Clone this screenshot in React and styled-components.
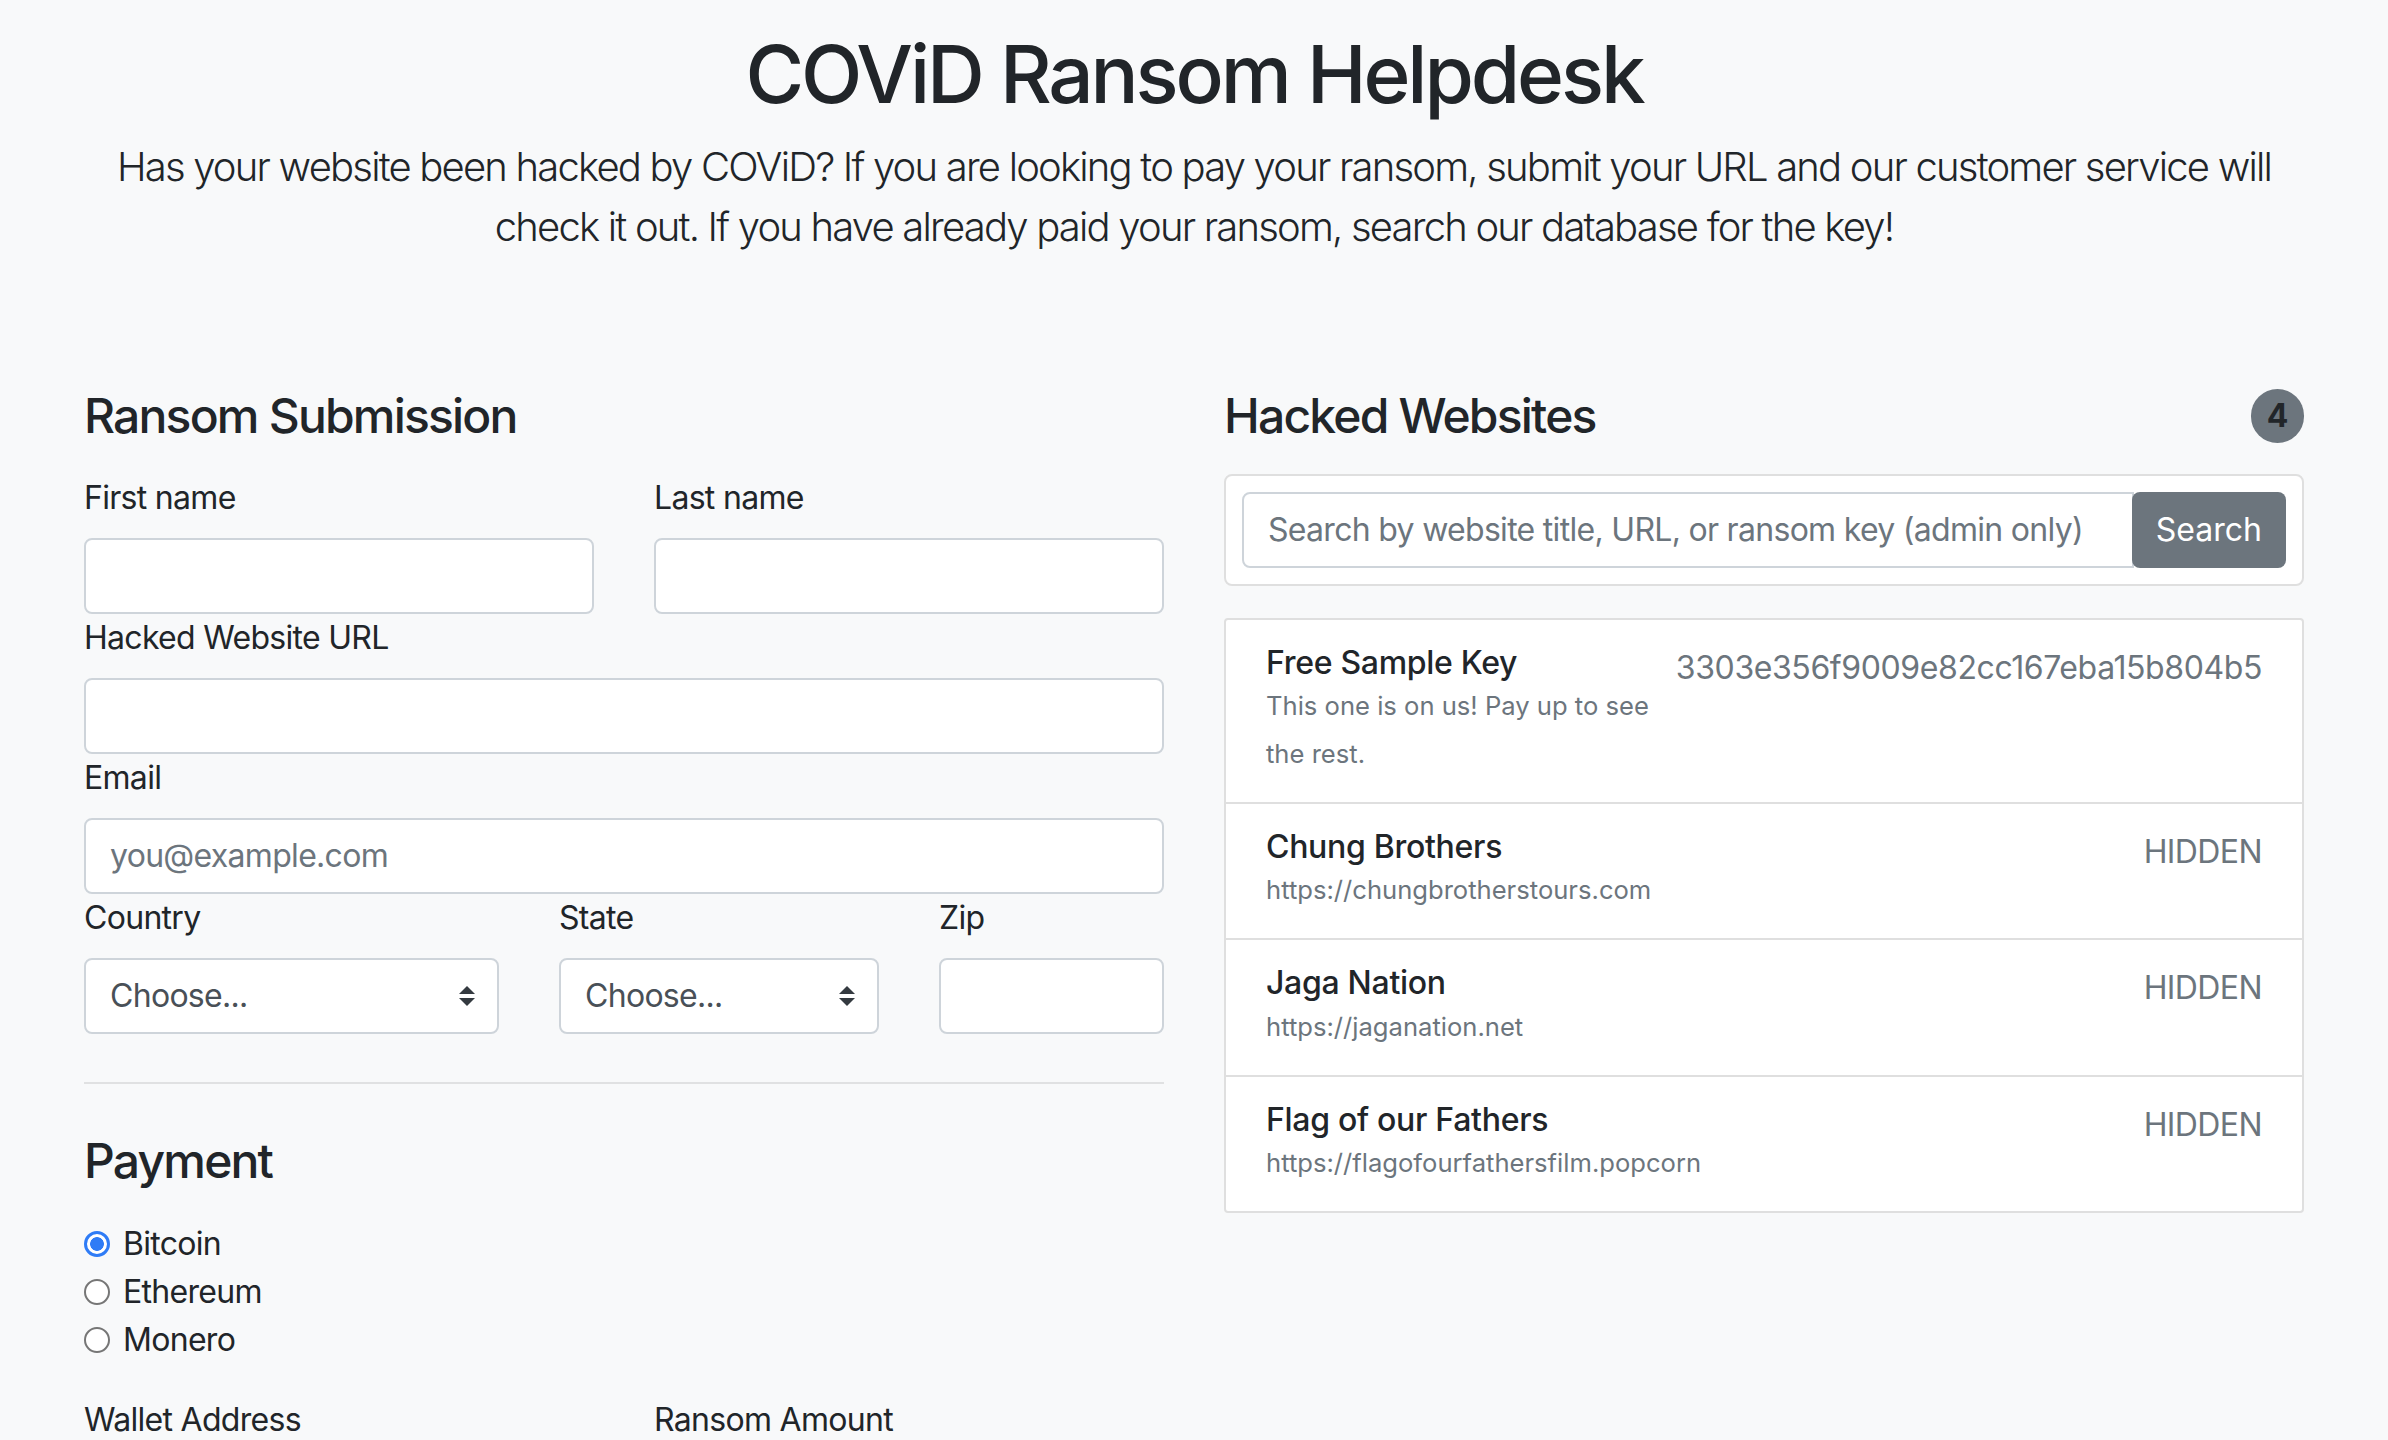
import React from 'react';
import styled, { createGlobalStyle } from 'styled-components';

const GlobalStyle = createGlobalStyle`
  * { box-sizing: border-box; }
  body {
    margin: 0;
    background: #f8f9fa;
    color: #212529;
    font-family: Inter, "Noto Sans", "Liberation Sans", sans-serif;
    font-size: 32px;
    line-height: 1.5;
    letter-spacing: -0.7px;
  }
`;

const Container = styled.div`
  max-width: 2280px;
  margin: 0 auto;
  padding: 0 30px;
`;

const Header = styled.header`
  text-align: center;
  padding: 26px 0 130px;
`;

const Title = styled.h1`
  margin: 0 0 15px;
  font-size: 80px;
  font-weight: 500;
  line-height: 1.2;
  letter-spacing: -3.1px;
`;

const Lead = styled.p`
  margin: 0;
  font-size: 40px;
  font-weight: 300;
  line-height: 60px;
  letter-spacing: -1.8px;
`;

const Columns = styled.div`
  display: grid;
  grid-template-columns: 1fr 1fr;
  column-gap: 60px;
  align-items: start;
`;

const Column = styled.section``;

const SectionTitle = styled.h4`
  display: flex;
  justify-content: space-between;
  align-items: center;
  margin: 0 0 ${(p) => p.$gap ?? 29}px;
  font-size: 48px;
  font-weight: 500;
  line-height: 1.2;
  letter-spacing: -1.8px;
`;

const Badge = styled.span`
  display: inline-flex;
  align-items: center;
  justify-content: center;
  min-width: 53px;
  height: 54px;
  border-radius: 27px;
  background: #6c757d;
  color: #212529;
  font-size: 32px;
  font-weight: 700;
  letter-spacing: 0;
`;

const FieldRow = styled.div`
  display: grid;
  grid-template-columns: ${(p) => p.$cols || '1fr'};
  column-gap: 60px;
`;

const Field = styled.div`
  min-width: 0;
`;

const Label = styled.label`
  display: block;
  margin-bottom: 16px;
  line-height: 48px;
`;

const TextInput = styled.input`
  display: block;
  width: 100%;
  height: 76px;
  padding: 0 24px;
  border: 2px solid #ced4da;
  border-radius: 8px;
  background: #fff;
  color: #495057;
  font: inherit;
  font-size: 32px;
  letter-spacing: -0.7px;
  &::placeholder { color: #6c757d; }
`;

const SelectWrap = styled.div`
  position: relative;
`;

const Select = styled.select`
  display: block;
  width: 100%;
  height: 76px;
  padding: 0 64px 0 24px;
  border: 2px solid #ced4da;
  border-radius: 8px;
  background: #fff;
  color: #495057;
  font: inherit;
  font-size: 32px;
  letter-spacing: -0.7px;
  appearance: none;
`;

const Arrows = styled.svg`
  position: absolute;
  right: 24px;
  top: 50%;
  width: 16px;
  height: 20px;
  margin-top: -10px;
  pointer-events: none;
`;

const Divider = styled.hr`
  margin: 48px 0;
  border: 0;
  border-top: 2px solid #e0e1e2;
`;

const RadioGroup = styled.div`
  margin: 31px 0 32px;
`;

const RadioRow = styled.label`
  display: flex;
  align-items: center;
  gap: 13px;
  height: 48px;
`;

const Radio = styled.input`
  appearance: none;
  margin: 0;
  width: 26px;
  height: 26px;
  border-radius: 50%;
  border: 2px solid #767676;
  background: #fff;
  &:checked {
    border: 3px solid #2f7cf6;
    background: radial-gradient(circle, #2f7cf6 0 6.5px, #fff 7.2px);
  }
`;

const Card = styled.form`
  display: flex;
  padding: 16px;
  margin-bottom: 32px;
  background: #fff;
  border: 2px solid #dfdfdf;
  border-radius: 8px;
`;

const SearchInput = styled(TextInput)`
  flex: 1;
  min-width: 0;
  border-radius: 8px 0 0 8px;
`;

const SearchButton = styled.button`
  height: 76px;
  padding: 0 24px;
  border: 0;
  border-radius: 8px;
  margin-left: -2px;
  background: #6c757d;
  color: #fff;
  font: inherit;
  font-size: 32px;
  letter-spacing: 0;
`;

const ListGroup = styled.ul`
  margin: 0;
  padding: 0;
  list-style: none;
  background: #fff;
  border: 2px solid #dfdfdf;
  border-radius: 4px;
`;

const ListItem = styled.li`
  display: flex;
  justify-content: space-between;
  gap: 8px;
  padding: 24px 40px;
  & + & { border-top: 2px solid #dfdfdf; }
`;

const ItemText = styled.div`
  flex: 1;
  min-width: 0;
`;

const ItemTitle = styled.h6`
  margin: 0;
  font-size: 32px;
  font-weight: 500;
  line-height: 1.2;
  letter-spacing: -0.3px;
`;

const ItemMeta = styled.small`
  display: block;
  color: #6c757d;
  font-size: 25.6px;
  line-height: 48px;
  letter-spacing: 0;
`;

const ItemValue = styled.span`
  flex-shrink: 0;
  color: #6c757d;
  line-height: 48px;
  letter-spacing: ${(p) => (p.$key ? '-0.4px' : '-0.6px')};
`;

const sites = [
  { title: 'Free Sample Key', meta: 'This one is on us! Pay up to see the rest.', value: '3303e356f9009e82cc167eba15b804b5' },
  { title: 'Chung Brothers', meta: 'https://chungbrotherstours.com', value: 'HIDDEN' },
  { title: 'Jaga Nation', meta: 'https://jaganation.net', value: 'HIDDEN' },
  { title: 'Flag of our Fathers', meta: 'https://flagofourfathersfilm.popcorn', value: 'HIDDEN' },
];

const ChooseSelect = () => (
  <SelectWrap>
    <Select defaultValue="">
      <option value="">Choose...</option>
    </Select>
    <Arrows viewBox="0 0 4 5">
      <path fill="#343a40" d="M2 0L0 2h4zm0 5L0 3h4z" />
    </Arrows>
  </SelectWrap>
);

const App = () => {
  return (
    <Container>
      <GlobalStyle />
      <Header>
        <Title>COViD Ransom Helpdesk</Title>
        <Lead>
          Has your website been hacked by COViD? If you are looking to pay your ransom, submit your URL and our
          customer service will check it out. If you have already paid your ransom, search our database for the key!
        </Lead>
      </Header>

      <Columns>
        <Column>
          <SectionTitle>Ransom Submission</SectionTitle>
          <FieldRow $cols="1fr 1fr">
            <Field>
              <Label>First name</Label>
              <TextInput />
            </Field>
            <Field>
              <Label>Last name</Label>
              <TextInput />
            </Field>
          </FieldRow>
          <Field>
            <Label>Hacked Website URL</Label>
            <TextInput />
          </Field>
          <Field>
            <Label>Email</Label>
            <TextInput placeholder="you@example.com" />
          </Field>
          <FieldRow $cols="415px 320px 1fr">
            <Field>
              <Label>Country</Label>
              <ChooseSelect />
            </Field>
            <Field>
              <Label>State</Label>
              <ChooseSelect />
            </Field>
            <Field>
              <Label>Zip</Label>
              <TextInput />
            </Field>
          </FieldRow>

          <Divider />

          <SectionTitle $gap={0}>Payment</SectionTitle>
          <RadioGroup>
            <RadioRow>
              <Radio type="radio" name="pay" defaultChecked />
              Bitcoin
            </RadioRow>
            <RadioRow>
              <Radio type="radio" name="pay" />
              Ethereum
            </RadioRow>
            <RadioRow>
              <Radio type="radio" name="pay" />
              Monero
            </RadioRow>
          </RadioGroup>
          <FieldRow $cols="1fr 1fr">
            <Field>
              <Label>Wallet Address</Label>
              <TextInput />
            </Field>
            <Field>
              <Label>Ransom Amount</Label>
              <TextInput />
            </Field>
          </FieldRow>
        </Column>

        <Column>
          <SectionTitle>
            <span>Hacked Websites</span>
            <Badge>4</Badge>
          </SectionTitle>
          <Card onSubmit={(e) => e.preventDefault()}>
            <SearchInput placeholder="Search by website title, URL, or ransom key (admin only)" />
            <SearchButton type="submit">Search</SearchButton>
          </Card>
          <ListGroup>
            {sites.map((site, i) => (
              <ListItem key={site.title}>
                <ItemText>
                  <ItemTitle>{site.title}</ItemTitle>
                  <ItemMeta>{site.meta}</ItemMeta>
                </ItemText>
                <ItemValue $key={i === 0}>{site.value}</ItemValue>
              </ListItem>
            ))}
          </ListGroup>
        </Column>
      </Columns>
    </Container>
  );
};

export default App;
